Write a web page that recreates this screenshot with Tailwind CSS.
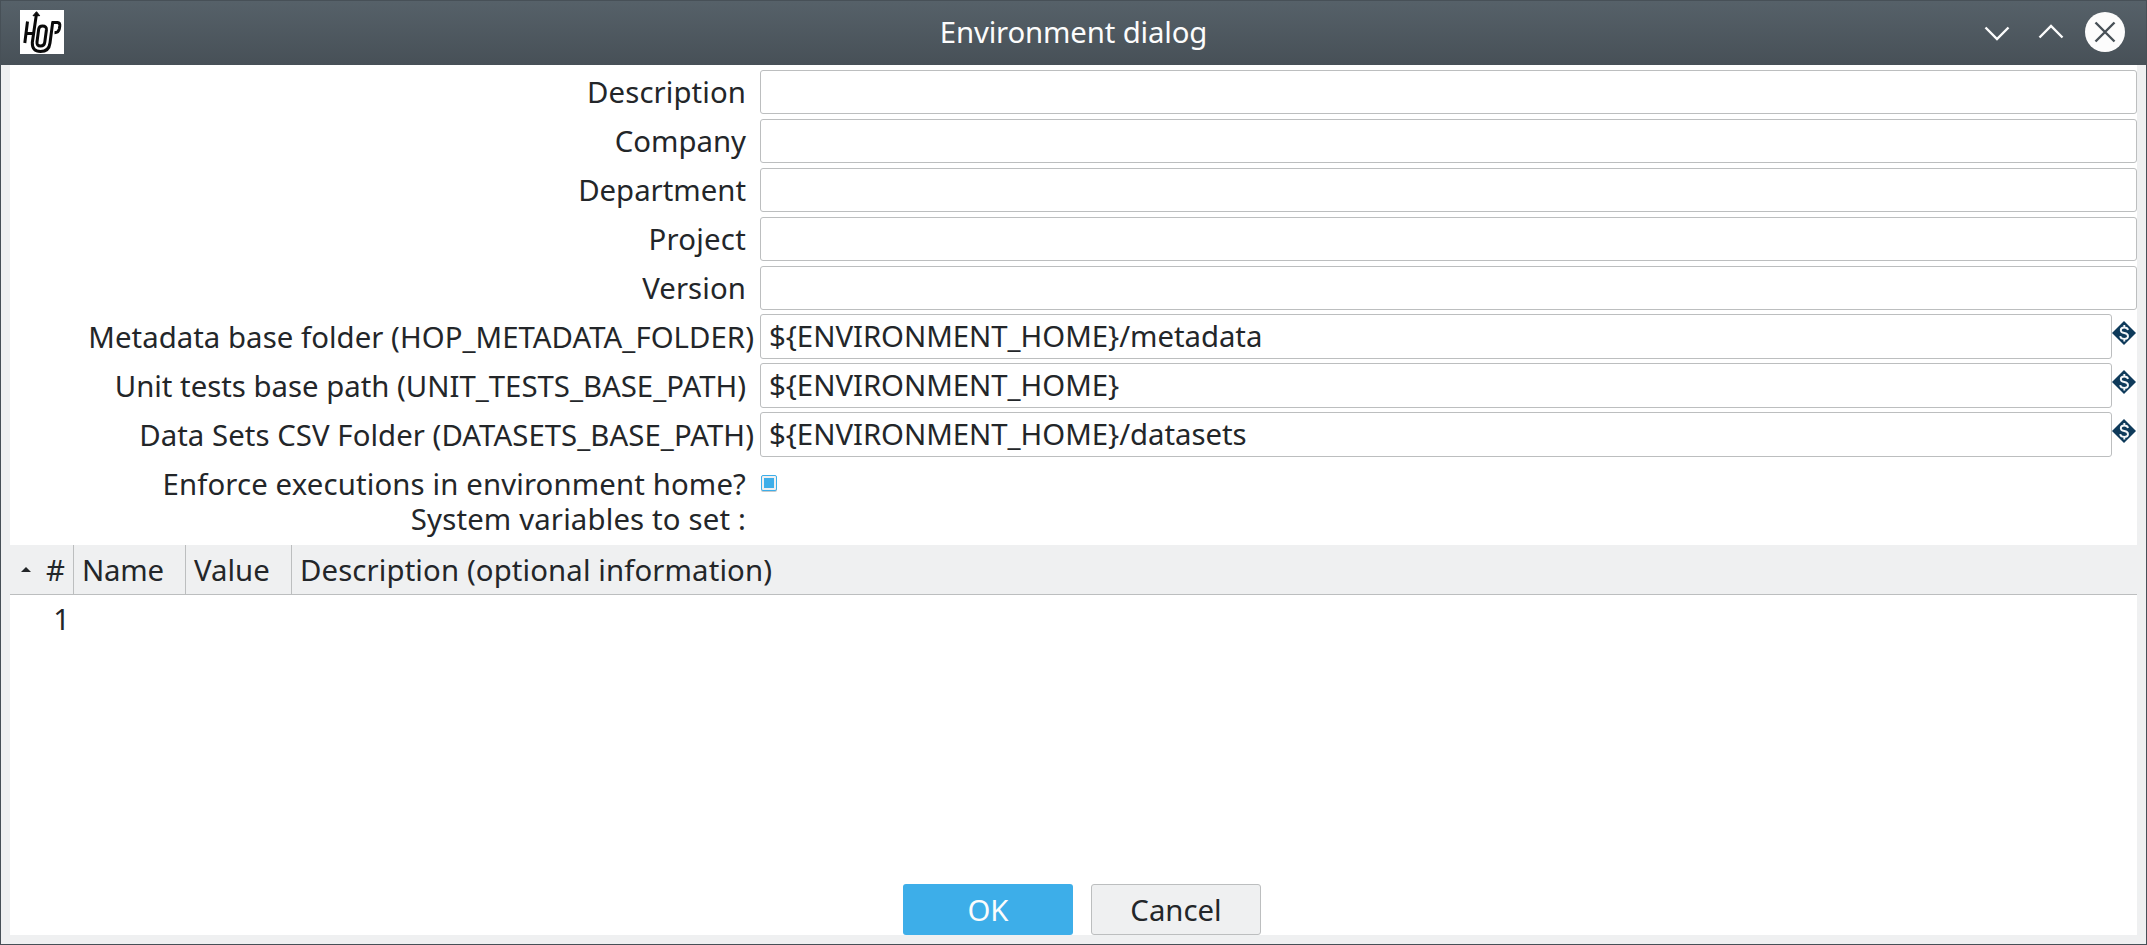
<!DOCTYPE html>
<html lang="en">
<head>
<meta charset="utf-8">
<title>Environment dialog</title>
<script src="https://cdn.jsdelivr.net/npm/@tailwindcss/browser@4"></script>
</head>
<body class="w-[2147px] h-[945px] overflow-hidden">
<div class="w-[2147px] h-[945px] flex flex-col bg-[#eff0f1] border border-[#475057] text-[#232629] text-[29.33px] leading-[40px] font-['Noto_Sans',sans-serif] whitespace-nowrap">
  <header class="h-16 shrink-0 grid grid-cols-[1fr_auto_1fr] items-center bg-linear-to-b from-[#566169] to-[#475057] text-[#fcfcfc]">
    <svg class="ml-[19px] -mt-[2px]" width="44" height="44" viewBox="0 0 44 44" fill="none" stroke="#0a0a0a" stroke-width="3">
      <rect width="44" height="44" fill="#fff" stroke="none"/>
      <path d="M7.500 11.500L4.800 33M6 23.500H13M16.300 5L12.300 32.500Q12 41.500 20.500 41.500Q29 41.500 30 33L32.700 12.400"/>
      <path d="M18.700 19Q19.200 16 22.500 16Q26.800 16 26.400 20L24.800 32Q24.300 36 20.500 36Q16.600 36 17 32ZM31.500 12.400H37.500Q40.200 12.800 39.800 16L39.300 19Q38.500 22.700 34.500 22.700"/>
      <path d="M13 5.700L16.500 1.700L19.700 5.700Z" fill="#0a0a0a" stroke-width="1"/>
    </svg>
    <h1 class="-mt-[3px] tracking-[-0.14px]">Environment dialog</h1>
    <div class="flex justify-self-end items-center mr-[21px] -mt-[2px]">
      <svg width="145" height="42" viewBox="0 0 145 42" fill="none" stroke="#fcfcfc" stroke-width="2.400">
        <path d="M5.500 16.500L17 28L28.500 16.500M59.500 26.500L71 15L82.500 26.500"/>
        <circle cx="125" cy="21" r="20" fill="#fcfcfc" stroke="none"/>
        <path stroke="#475057" d="M115.500 11.500L134.500 30.500M134.500 11.500L115.500 30.500"/>
      </svg>
    </div>
  </header>

  <main class="mx-[9px] mb-[9px] flex-1 flex flex-col bg-white">
    <section class="pt-[5px] h-[480px] flex flex-col">
      <div class="flex h-[49px]"><label class="w-[736px] mr-[14px] leading-[44px] text-right tracking-[0.1px]">Description</label><div class="flex-1 h-[44px] border border-[#bcbebf] rounded-[3px]"></div></div>
      <div class="flex h-[49px]"><label class="w-[736px] mr-[14px] leading-[44px] text-right">Company</label><div class="flex-1 h-[44px] border border-[#bcbebf] rounded-[3px]"></div></div>
      <div class="flex h-[49px]"><label class="w-[736px] mr-[14px] leading-[44px] text-right">Department</label><div class="flex-1 h-[44px] border border-[#bcbebf] rounded-[3px]"></div></div>
      <div class="flex h-[49px]"><label class="w-[736px] mr-[14px] leading-[44px] text-right tracking-[0.25px]">Project</label><div class="flex-1 h-[44px] border border-[#bcbebf] rounded-[3px]"></div></div>
      <div class="flex h-[48px]"><label class="w-[736px] mr-[14px] leading-[44px] text-right tracking-[0.1px]">Version</label><div class="flex-1 h-[44px] border border-[#bcbebf] rounded-[3px]"></div></div>

      <div class="flex h-[49px]"><label class="w-[744px] mr-[6px] leading-[46px] text-right tracking-[0.05px]">Metadata base folder (HOP_METADATA_FOLDER)</label><div class="flex-1 h-[45px] border border-[#bcbebf] rounded-[3px] pl-2 leading-[42px] tracking-[-0.03px]">${ENVIRONMENT_HOME}/metadata</div>
        <svg class="mt-[7px] mr-px" width="24" height="24" viewBox="0 0 24 24" fill="none"><path d="M12 0L24 12L12 24L0 12Z" fill="#0e3a5a"/><path d="M16 9Q15.500 6.500 12.200 6.500Q8.800 6.500 8.800 9.200Q8.800 11.400 12.300 12Q16 12.600 16 15.200Q16 17.900 12.200 17.900Q8.600 17.900 8.200 15.200M12.300 4V7.500M12.300 17V20.400" stroke="#f4f6f8" stroke-width="1.900"/></svg></div>
      <div class="flex h-[49px]"><label class="w-[736px] mr-[14px] leading-[46px] text-right">Unit tests base path (UNIT_TESTS_BASE_PATH)</label><div class="flex-1 h-[45px] border border-[#bcbebf] rounded-[3px] pl-2 leading-[42px] tracking-[-0.03px]">${ENVIRONMENT_HOME}</div>
        <svg class="mt-[7px] mr-px" width="24" height="24" viewBox="0 0 24 24" fill="none"><path d="M12 0L24 12L12 24L0 12Z" fill="#0e3a5a"/><path d="M16 9Q15.500 6.500 12.200 6.500Q8.800 6.500 8.800 9.200Q8.800 11.400 12.300 12Q16 12.600 16 15.200Q16 17.900 12.200 17.900Q8.600 17.900 8.200 15.200M12.300 4V7.500M12.300 17V20.400" stroke="#f4f6f8" stroke-width="1.900"/></svg></div>
      <div class="flex h-[49px]"><label class="w-[744px] mr-[6px] leading-[46px] text-right tracking-[0.06px]">Data Sets CSV Folder (DATASETS_BASE_PATH)</label><div class="flex-1 h-[45px] border border-[#bcbebf] rounded-[3px] pl-2 leading-[42px] tracking-[-0.03px]">${ENVIRONMENT_HOME}/datasets</div>
        <svg class="mt-[7px] mr-px" width="24" height="24" viewBox="0 0 24 24" fill="none"><path d="M12 0L24 12L12 24L0 12Z" fill="#0e3a5a"/><path d="M16 9Q15.500 6.500 12.200 6.500Q8.800 6.500 8.800 9.200Q8.800 11.400 12.300 12Q16 12.600 16 15.200Q16 17.900 12.200 17.900Q8.600 17.900 8.200 15.200M12.300 4V7.500M12.300 17V20.400" stroke="#f4f6f8" stroke-width="1.900"/></svg></div>
      <div class="flex h-[42px]"><label class="w-[736px] mr-[15px] pt-[5px] leading-[36px] text-right tracking-[0.14px]">Enforce executions in environment home?</label>
        <div class="mt-[14px] w-4 h-4 border border-[#3daee9] rounded-[2px] bg-[#eff0f1] p-[2px] shadow-[0_1px_0_#c8c9ca]"><div class="w-full h-full bg-[#3daee9]"></div></div></div>
      <div class="w-[736px] leading-[32px] text-right tracking-[0.16px]">System variables to set :</div>
    </section>

    <section class="flex-1">
      <div class="flex h-[50px] leading-[50px] bg-[#eff0f1] border-b border-[#bcbebf]">
        <div class="w-[64px] flex items-center border-r border-[#bcbebf]"><svg class="ml-[11px] mr-[15px] -mt-px" width="10" height="5" viewBox="0 0 10 5"><path d="M0 5L5 0L10 5Z" fill="#232629"/></svg><span>#</span></div>
        <div class="w-[112px] pl-2 border-r border-[#bcbebf] tracking-[-0.2px]">Name</div>
        <div class="w-[106px] pl-2 border-r border-[#bcbebf]">Value</div>
        <div class="flex-1 pl-2 tracking-[0.12px]">Description (optional information)</div>
      </div>
      <div class="w-[60px] text-right leading-[48px]">1</div>
    </section>

    <footer class="flex gap-[18px] pl-[893px] h-[51px]">
      <button class="w-[170px] h-[51px] rounded-[3px] bg-[#3daee9] text-[#fcfcfc]">OK</button>
      <button class="w-[170px] h-[51px] rounded-[3px] bg-[#eff0f1] border border-[#bcbebf]">Cancel</button>
    </footer>
  </main>
</div>
</body>
</html>
